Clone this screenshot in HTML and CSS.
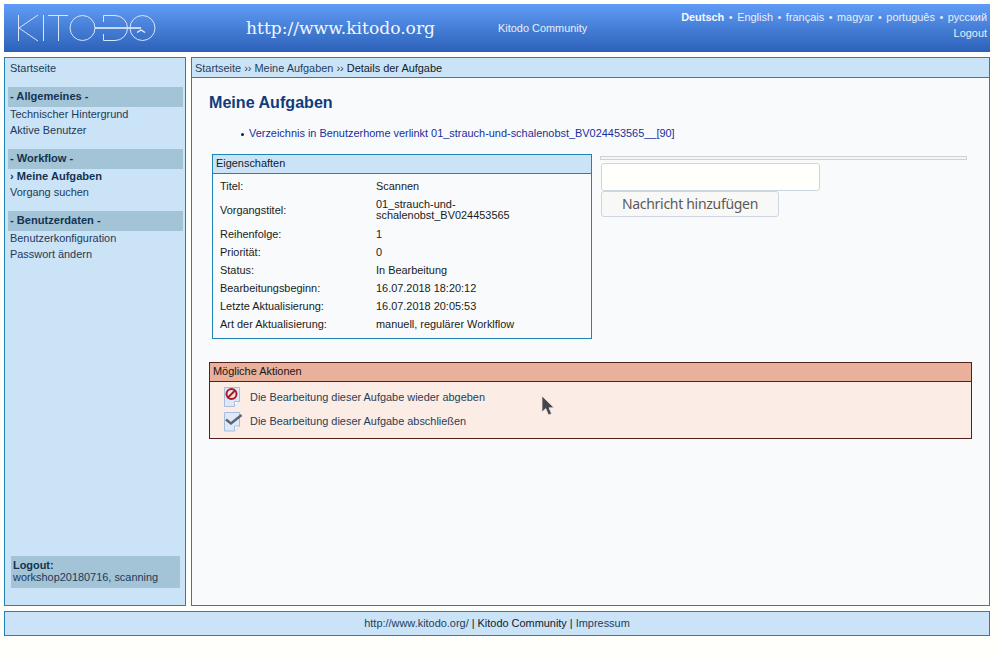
FILE: index.html
```html
<!DOCTYPE html>
<html lang="de">
<head>
<meta charset="utf-8">
<title>Kitodo</title>
<link rel="stylesheet" href="styles.css">
</head>
<body>
<header class="top">
  <svg class="logo" width="140" height="30" viewBox="0 0 140 30" fill="none" stroke="#d9e6fa" stroke-width="1">
    <path d="M1.500 2V28M21 2L2 15L21 28"/>
    <path d="M26.500 2V28"/>
    <path d="M31 2.500H51M41.500 2.500V28"/>
    <circle cx="65.500" cy="15" r="12.500"/>
    <path d="M78 15H124" stroke="#f2f7ff" stroke-width="1.500"/>
    <path d="M86.500 9V2.500H98A12.500 12.500 0 0 1 110.500 15A12.500 12.500 0 0 1 98 27.500H86.500V21"/>
    <circle cx="125.500" cy="15" r="12.500"/>
    <path d="M120 19.500L124 17L128 19.500" stroke="#f2f7ff" stroke-width="1.200"/>
  </svg>
  <div class="site">http://www.kitodo.org</div>
  <div class="community">Kitodo Community</div>
  <div class="meta">
    <div class="langs"><b>Deutsch</b> <i>•</i> English <i>•</i> français <i>•</i> magyar <i>•</i> português <i>•</i> русский</div>
    <div class="logout-link">Logout</div>
  </div>
</header>

<div class="columns">
  <nav class="side">
    <div class="nav-home">Startseite</div>
    <h3 class="nav-head">- Allgemeines -</h3>
    <div class="nav-item">Technischer Hintergrund</div>
    <div class="nav-item">Aktive Benutzer</div>
    <h3 class="nav-head">- Workflow -</h3>
    <div class="nav-item nav-current">› Meine Aufgaben</div>
    <div class="nav-item">Vorgang suchen</div>
    <h3 class="nav-head">- Benutzerdaten -</h3>
    <div class="nav-item">Benutzerkonfiguration</div>
    <div class="nav-item">Passwort ändern</div>
    <div class="who"><b>Logout:</b><br>workshop20180716, scanning</div>
  </nav>

  <main class="main">
    <div class="crumbs"><span class="crumb-link">Startseite ›› Meine Aufgaben ››</span> Details der Aufgabe</div>
    <div class="content">
      <h1 class="title">Meine Aufgaben</h1>
      <ul class="messages"><li>Verzeichnis in Benutzerhome verlinkt 01_strauch-und-schalenobst_BV024453565__[90]</li></ul>
      <div class="two">
        <section class="props">
          <h2 class="props-head">Eigenschaften</h2>
          <table class="props-table">
            <tr><td class="k">Titel:</td><td>Scannen</td></tr>
            <tr class="tall"><td class="k">Vorgangstitel:</td><td>01_strauch-und-<br>schalenobst_BV024453565</td></tr>
            <tr><td class="k">Reihenfolge:</td><td>1</td></tr>
            <tr><td class="k">Priorität:</td><td>0</td></tr>
            <tr><td class="k">Status:</td><td>In Bearbeitung</td></tr>
            <tr><td class="k">Bearbeitungsbeginn:</td><td>16.07.2018 18:20:12</td></tr>
            <tr><td class="k">Letzte Aktualisierung:</td><td>16.07.2018 20:05:53</td></tr>
            <tr><td class="k">Art der Aktualisierung:</td><td>manuell, regulärer Worklflow</td></tr>
          </table>
        </section>
        <div class="note">
          <div class="note-rule"></div>
          <input class="note-input" type="text" aria-label="Nachricht">
          <button class="note-btn" type="button">Nachricht hinzufügen</button>
        </div>
      </div>
      <section class="actions">
        <h2 class="actions-head">Mögliche Aktionen</h2>
        <div class="action">
          <svg class="doc" width="20" height="22" viewBox="0 0 20 22">
            <path d="M1.500 1.500H16.500V15.500L11.500 20.500H1.500Z" fill="#dfe8f6" stroke="#a9bcdc"/>
            <path d="M16.500 15.500H11.500V20.500" fill="#fff" stroke="#a9bcdc"/>
            <circle cx="8.500" cy="8" r="5" fill="#efe4e6" stroke="#a81a26" stroke-width="2"/>
            <path d="M5 11.500L12 4.500" stroke="#a81a26" stroke-width="2"/>
          </svg>
          <span>Die Bearbeitung dieser Aufgabe wieder abgeben</span>
        </div>
        <div class="action">
          <svg class="doc" width="20" height="22" viewBox="0 0 20 22">
            <path d="M1.500 2.500H16.500V16L11.500 21H1.500Z" fill="#dfe8f6" stroke="#a9bcdc"/>
            <path d="M16.500 16H11.500V21" fill="#fff" stroke="#a9bcdc"/>
            <path d="M3 9.500L8 13.500L18.500 5" fill="none" stroke="#5a656c" stroke-width="2.400"/>
          </svg>
          <span>Die Bearbeitung dieser Aufgabe abschließen</span>
        </div>
      </section>
    </div>
  </main>
</div>

<footer class="foot"><span class="crumb-link">http://www.kitodo.org/</span> | Kitodo Community | <span class="crumb-link">Impressum</span></footer>

<svg class="cursor" width="14" height="22" viewBox="0 0 14 22">
  <path d="M1 1V17L4.800 13.600L7.500 20L10.500 18.700L8 12.800H13Z" fill="#45454c" stroke="#e8e0dc" stroke-width="0.800"/>
</svg>
</body>
</html>
```

FILE: styles.css
```css
* { box-sizing: border-box; }
html, body { height: 660px; }
body {
  margin: 0;
  padding: 4px 4px 0;
  width: 994px;
  background: #fffffb;
  font: 10.93px/16px "Liberation Sans", Arial, sans-serif;
  color: #1d3a56;
  position: relative;
  overflow: hidden;
}
.top {
  height: 48px;
  display: flex;
  align-items: flex-start;
  background: linear-gradient(#609cf6, #2c61b8);
  color: #e6effb;
}
.logo { margin: 9px 0 0 13px; flex: none; }
.site {
  margin: 13px 0 0 89px;
  width: 252px;
  font: 17.1px/22px "DejaVu Serif", serif;
  color: #f2f6fd;
}
.community { margin-top: 16px; }
.meta { margin: 5px 3px 0 auto; text-align: right; }
.langs b { color: #f5f8fe; }
.langs i { font-style: normal; padding: 0 1.500px; }

.columns { display: flex; gap: 5px; margin-top: 5px; height: 549px; }
.side {
  width: 182px;
  display: flex;
  flex-direction: column;
  padding: 2px 2px 17px 3px;
  background: #cbe3f7;
  border: 1px solid #1f84b5;
}
.nav-home { padding-left: 2px; height: 16px; margin-bottom: 11px; }
.nav-head {
  margin: 0 0 -1px;
  height: 20px;
  padding-left: 2px;
  font-size: 11.100px;
  line-height: 19px;
  font-weight: bold;
  background: #a3c3d6;
  color: #123352;
}
.nav-item { padding-left: 2px; height: 16px; position: relative; }
.nav-item + .nav-head { margin-top: 11px; }
.nav-current { font-weight: bold; font-size: 11.100px; color: #123352; }
.who {
  margin: auto 3px 0 3px;
  padding: 3px 2px 0;
  height: 32px;
  line-height: 12px;
  background: #a3c3d6;
}
.who b { color: #123352; }

.main {
  flex: 1;
  display: flex;
  flex-direction: column;
  border: 1px solid #1f84b5;
  background: #f8fafb;
}
.crumbs {
  height: 20px;
  padding: 2px 3px 0;
  background: #cbe3f7;
  border-bottom: 1px solid #1f84b5;
  color: #10202e;
}
.crumb-link { color: #1d3f5f; }
.content { padding: 15px 17px 0; }
.title {
  margin: 0;
  font-size: 16.100px;
  line-height: 18px;
  font-weight: bold;
  color: #113a7c;
}
.messages {
  margin: 14px 0 0;
  padding: 0 0 0 32px;
  list-style: none;
}
.messages li { color: #1a2e9e; display: flex; align-items: center; }
.messages li::before {
  content: "";
  width: 3px;
  height: 3px;
  margin: 2px 5px 0 0;
  border-radius: 50%;
  background: #10243c;
}
.two { display: flex; margin: 13px 0 0 3px; }
.props {
  width: 380px;
  height: 185px;
  flex: none;
  border: 1px solid #1f84b5;
}
.props-head {
  margin: 0;
  height: 19px;
  padding-left: 3px;
  font-size: 10.930px;
  line-height: 17px;
  font-weight: normal;
  color: #10202e;
  background: #cbe3f7;
  border-bottom: 1px solid #1f84b5;
}
.props-table {
  margin: 3px 0 0 7px;
  border-collapse: collapse;
  color: #181c20;
  line-height: 11px;
}
.props-table td { padding: 0; height: 18px; vertical-align: middle; width: 156px; }
.props-table td:last-child { width: 200px; }
.props-table .tall td { height: 30px; }
.note { margin-left: 8px; flex: 1; display: flex; flex-direction: column; align-items: flex-start; }
.note-rule {
  width: 367px;
  height: 4px;
  margin-top: 2px;
  border: 1px solid #cfd3d6;
  background: #f2f4f5;
}
.note-input {
  width: 219px;
  height: 28px;
  margin: 3px 0 0 1px;
  padding: 0;
  border: 1px solid #cdd5e2;
  border-radius: 3px;
  background: #fffffb;
  display: block;
}
.note-btn {
  width: 178px;
  height: 26px;
  margin: 0 0 0 1px;
  padding: 0;
  border: 1px solid #cdd5e2;
  border-radius: 3px;
  background: #f8f8f7;
  color: #5a5a5a;
  font: 14px/22px "Noto Sans", sans-serif;
  letter-spacing: -0.3px;
}
.actions {
  margin-top: 23px;
  height: 77px;
  width: 763px;
  border: 1px solid #54201c;
  background: #fbece5;
}
.actions-head {
  margin: 0;
  height: 19px;
  padding-left: 3px;
  font-size: 10.930px;
  line-height: 17px;
  font-weight: normal;
  color: #1b1410;
  background: #e9b09c;
  border-bottom: 1px solid #54201c;
}
.action { display: flex; align-items: center; height: 24px; padding-left: 13px; gap: 7px; color: #2a3d55; }
.action:first-of-type { margin-top: 3px; }
.doc { flex: none; }
.foot {
  margin-top: 5px;
  height: 25px;
  text-align: center;
  line-height: 23px;
  background: #cbe3f7;
  border: 1px solid #1f84b5;
  color: #10202e;
}
.cursor { position: absolute; left: 541px; top: 395px; }
```
